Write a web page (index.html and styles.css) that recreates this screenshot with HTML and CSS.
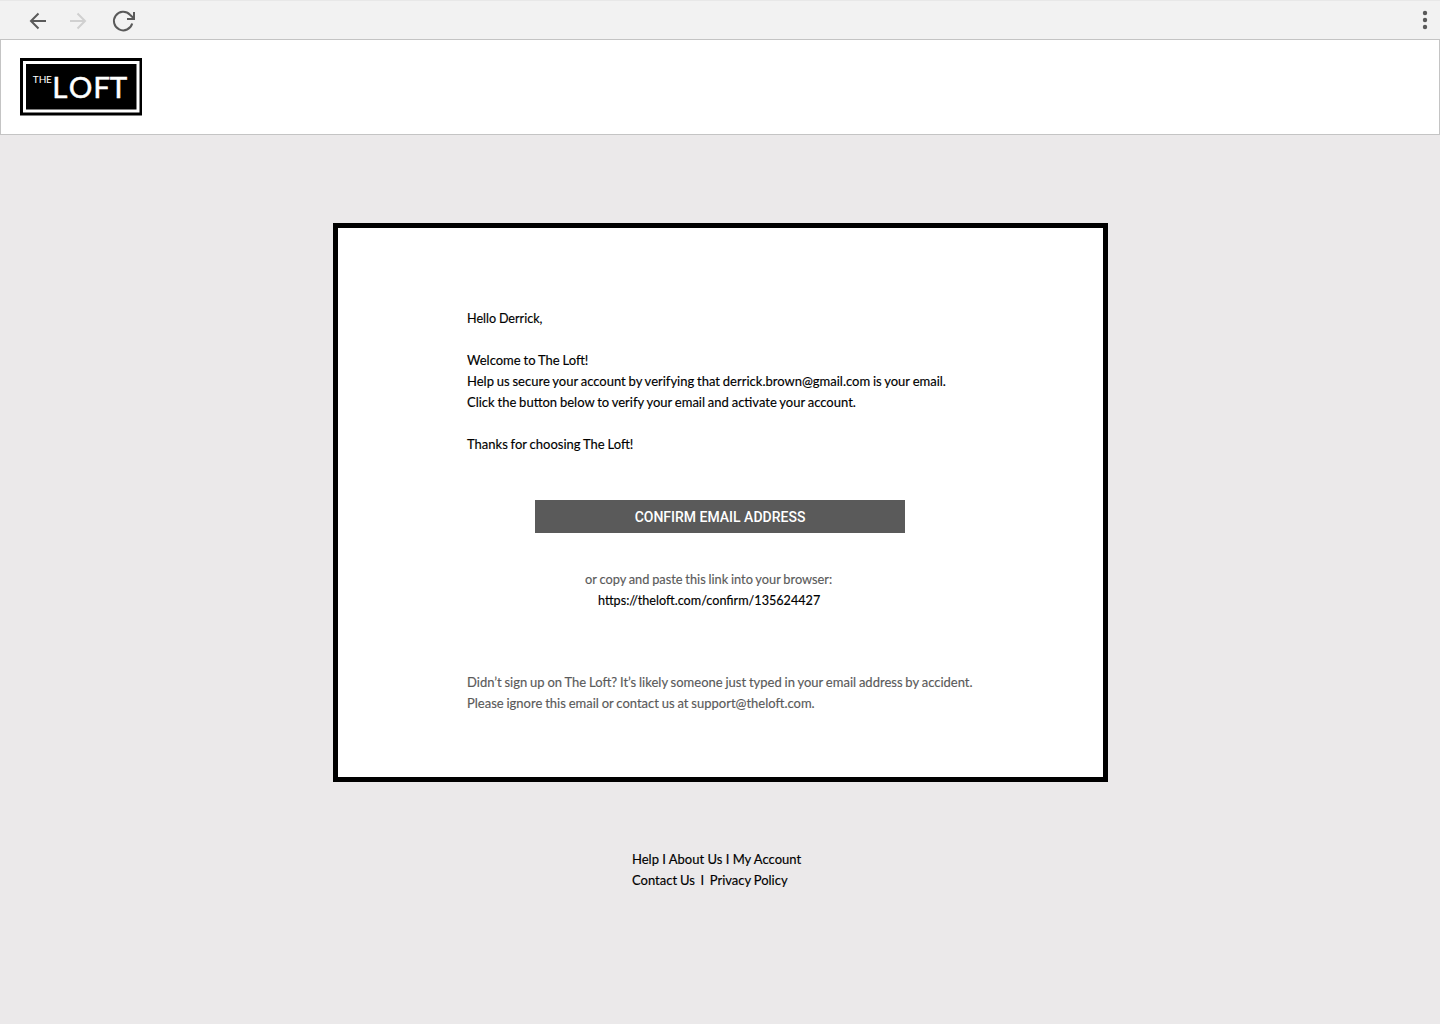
FILE: index.html
```html
<!DOCTYPE html>
<html lang="en">
<head>
<meta charset="utf-8">
<title>The Loft</title>
<link rel="stylesheet" href="styles.css">
</head>
<body>
<div class="toolbar">
  <svg class="nav-icons" width="140" height="39" viewBox="0 0 140 39" fill="none" stroke-width="2">
    <path stroke="#5a5a5a" d="M46 21H31M38.500 13.500L31 21l7.500 7.500"/>
    <path stroke="#d0d0d0" d="M70 21H85M77.500 13.500L85 21l-7.500 7.500"/>
    <path stroke="#5a5a5a" d="M132.200 23.500A9.300 9.300 0 1 1 130 14.700L134 18.500M134 12V19H127"/>
  </svg>
  <svg class="menu-icon" width="10" height="39" viewBox="0 0 10 39" fill="#5a5a5a">
    <circle cx="5" cy="13" r="2.200"/><circle cx="5" cy="20" r="2.200"/><circle cx="5" cy="27" r="2.200"/>
  </svg>
</div>
<header class="header">
  <svg class="logo" width="122" height="58" viewBox="0 0 122 58">
    <path d="M0 0H122V57.500H0Z"/>
    <path d="M4.500 4.500H118V53H4.500Z" fill="none" stroke="#fff" stroke-width="3"/>
    <text class="logo-the" x="12.800 18.700 26" y="25">THE</text>
    <text class="logo-loft" x="32.200 48.700 73.300 89.700" y="39.500">LOFT</text>
  </svg>
</header>
<main class="page">
  <section class="card">
    <div class="message">
      <p class="greeting">Hello Derrick,</p>
      <p class="gap">Welcome to The Loft!</p>
      <p>Help us secure your account by verifying that derrick.brown@gmail.com is your email.</p>
      <p>Click the button below to verify your email and activate your account.</p>
      <p class="gap">Thanks for choosing The Loft!</p>
    </div>
    <button class="confirm">CONFIRM EMAIL ADDRESS</button>
    <div class="link">
      <p class="muted">or copy and paste this link into your browser:</p>
      <p class="url">https://theloft.com/confirm/135624427</p>
    </div>
    <div class="notice muted">
      <p>Didn’t sign up on The Loft? It’s likely someone just typed in your email address by accident.</p>
      <p>Please ignore this email or contact us at support@theloft.com.</p>
    </div>
  </section>
  <footer class="footer">
    <p class="links">Help I About Us I My Account</p>
    <p>Contact Us &nbsp;I&nbsp; Privacy Policy</p>
  </footer>
</main>
</body>
</html>
```
FILE: styles.css
```css
* { box-sizing: border-box; }
body { margin: 0; height: 1024px; background: #ebe9ea; color: #000; font: 13px/21px Lato, sans-serif; word-spacing: -0.5px; }
p { margin: 0; white-space: nowrap; -webkit-text-stroke: 0.15px currentColor; }
svg { display: block; }
.toolbar { height: 39px; display: flex; justify-content: space-between; padding-right: 10px; background: #f2f2f2; border-top: 1px solid #e8e8e8; }
.nav-icons, .menu-icon { margin-top: -1px; }
.header { height: 96px; padding: 18px 19px; background: #fff; border: 1px solid #c4c4c4; }
.logo-the, .logo-loft { fill: #fff; font-family: Lato, sans-serif; }
.logo-the { font-size: 10px; }
.logo-loft { font-size: 29.5px; stroke: #fff; stroke-width: 0.5px; }
.page { display: flex; flex-direction: column; align-items: center; padding: 88px 0 0 1px; }
.card { width: 775px; height: 559px; padding: 80px 129px 0; background: #fff; border: 5px solid #000; }
.gap { margin-top: 21px; }
.greeting { font-size: 12.6px; }
.confirm { display: block; width: 370px; height: 33px; margin: 45px 0 0 68px; padding: 2px 0 0; border: 0; background: #5a5a5a; color: #fff; font: 500 14px/31px Roboto, sans-serif; }
.link { width: 247px; margin: 36px 0 0 118px; }
.link .muted { font-size: 12.8px; }
.url { padding-left: 13px; font-size: 12.65px; }
.muted { color: #5a5a5a; }
.notice { margin-top: 61px; }
.footer { width: 177px; margin-top: 67px; }
.links { word-spacing: 0; }
```
